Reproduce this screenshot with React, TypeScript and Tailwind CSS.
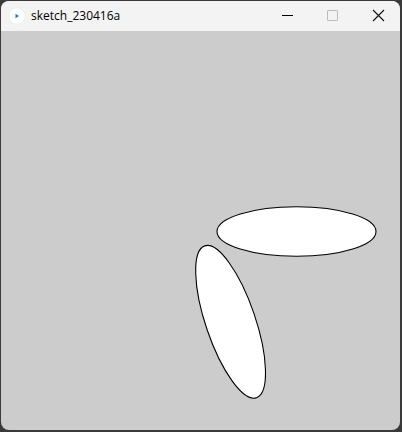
import React from "react";

export default function App() {
  return (
    <div className="w-[402px] h-[432px] bg-[#3a3a3a] pt-px pl-px">
      <div className="w-[399px] h-[429px] rounded-[8px] overflow-hidden flex flex-col bg-[#cccccc]">
        <div className="h-[30px] bg-[#f3f3f3] flex items-center shrink-0 relative">
          <div className="ml-[8px] w-[16px] h-[16px] rounded-full bg-white flex items-center justify-center shadow-[0_0_1px_rgba(0,0,0,0.15)]">
            <svg width="6" height="6" viewBox="0 0 6 6">
              <path d="M1.5 0.8 L5 3 L1.5 5.2 Z" fill="#1a73e8" />
            </svg>
          </div>
          <span
            className="ml-[6px] text-[12px] text-black leading-none"
            style={{ fontFamily: '"Segoe UI", "Open Sans", "Noto Sans", sans-serif' }}
          >
            sketch_230416a
          </span>
          <div className="absolute left-[281px] top-[14px] w-[11px] h-px bg-black" />
          <div className="absolute left-[326px] top-[9px] w-[11px] h-[11px] border border-[#bdbdbd] rounded-[1px]" />
          <svg className="absolute left-[371px] top-[8px]" width="13" height="13" viewBox="0 0 13 13">
            <path d="M1 1 L12 12 M12 1 L1 12" stroke="#111" strokeWidth="1.1" />
          </svg>
        </div>
        <div className="flex-1 relative">
          <svg width="399" height="399" viewBox="0 0 399 399" className="block">
            <ellipse cx="295.5" cy="200.5" rx="79.5" ry="24.8" fill="#fff" stroke="#000" strokeWidth="1.1" />
            <ellipse
              cx="0"
              cy="0"
              rx="80.2"
              ry="24.8"
              fill="#fff"
              stroke="#000"
              strokeWidth="1.1"
              transform="translate(229.6 290.8) rotate(71.2)"
            />
          </svg>
        </div>
      </div>
    </div>
  );
}
